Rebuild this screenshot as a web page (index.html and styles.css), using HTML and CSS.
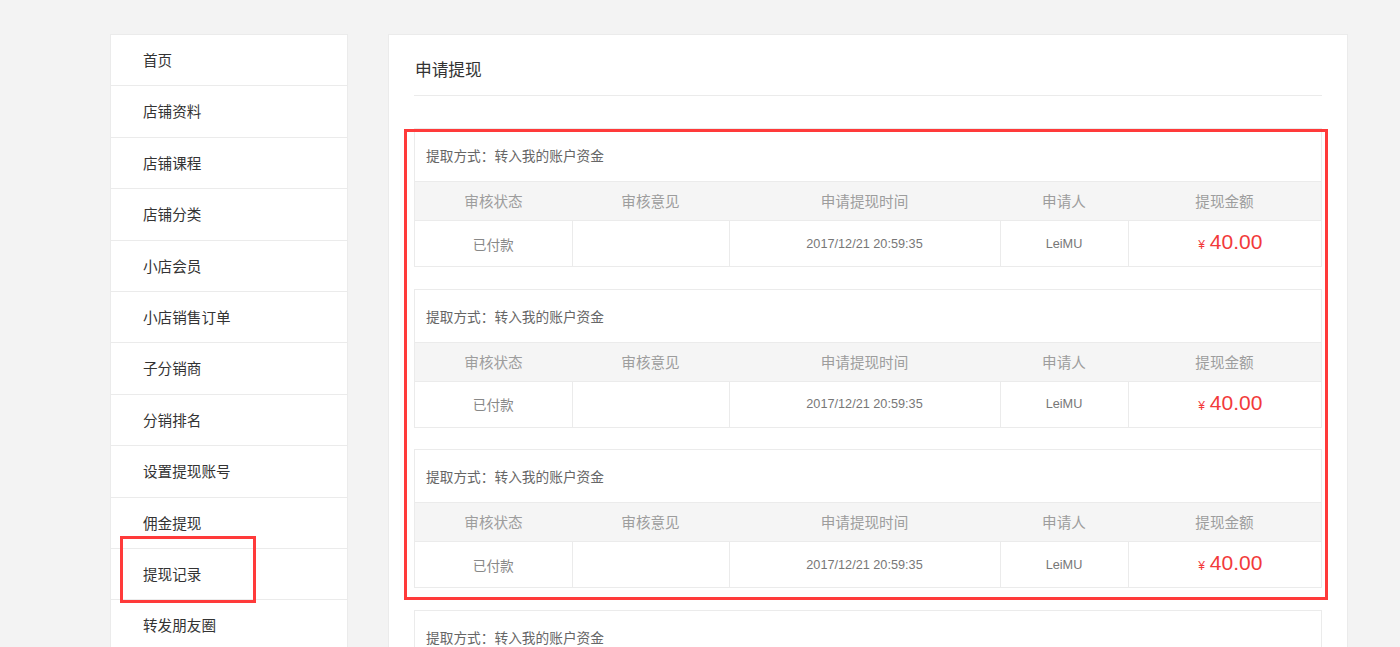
FILE: index.html
```html
<!DOCTYPE html>
<html>
<head>
<meta charset="utf-8">
<title>提现记录</title>
<link rel="stylesheet" href="styles.css">
</head>
<body>

<div class="wrap">

<div class="sidebar">
<a class="navItem" href="#">首页</a>
<a class="navItem" href="#">店铺资料</a>
<a class="navItem" href="#">店铺课程</a>
<a class="navItem" href="#">店铺分类</a>
<a class="navItem" href="#">小店会员</a>
<a class="navItem" href="#">小店销售订单</a>
<a class="navItem" href="#">子分销商</a>
<a class="navItem" href="#">分销排名</a>
<a class="navItem" href="#">设置提现账号</a>
<a class="navItem" href="#">佣金提现</a>
<a class="navItem current" href="#">提现记录<span class="markBox markNav"></span></a>
<a class="navItem" href="#">转发朋友圈</a>
</div>

<div class="main">
<div class="mainTitle">申请提现</div>

<div class="recordList">
<span class="markBox markList"></span>

<div class="record">
<div class="recordHead">提取方式：转入我的账户资金</div>
<table class="recordTable">
<tr><th class="c1">审核状态</th><th class="c2">审核意见</th><th class="c3">申请提现时间</th><th class="c4">申请人</th><th class="c5">提现金额</th></tr>
<tr><td>已付款</td><td></td><td class="num">2017/12/21 20:59:35</td><td class="num">LeiMU</td><td class="money"><span class="yen">¥</span>40.00</td></tr>
</table>
</div>

<div class="record">
<div class="recordHead">提取方式：转入我的账户资金</div>
<table class="recordTable">
<tr><th class="c1">审核状态</th><th class="c2">审核意见</th><th class="c3">申请提现时间</th><th class="c4">申请人</th><th class="c5">提现金额</th></tr>
<tr><td>已付款</td><td></td><td class="num">2017/12/21 20:59:35</td><td class="num">LeiMU</td><td class="money"><span class="yen">¥</span>40.00</td></tr>
</table>
</div>

<div class="record">
<div class="recordHead">提取方式：转入我的账户资金</div>
<table class="recordTable">
<tr><th class="c1">审核状态</th><th class="c2">审核意见</th><th class="c3">申请提现时间</th><th class="c4">申请人</th><th class="c5">提现金额</th></tr>
<tr><td>已付款</td><td></td><td class="num">2017/12/21 20:59:35</td><td class="num">LeiMU</td><td class="money"><span class="yen">¥</span>40.00</td></tr>
</table>
</div>

<div class="record">
<div class="recordHead">提取方式：转入我的账户资金</div>
</div>

</div>
</div>

</div>

</body>
</html>
```

FILE: styles.css
```css
html,body{
margin:0;
padding:0;
}

body{
background-color:#f3f3f3;
font-family:"Noto Sans CJK SC","Liberation Sans",sans-serif;
color:#333;
height:647px;
overflow:hidden;
}

.wrap{
display:flex;
align-items:flex-start;
gap:40px;
padding:34px 0 0 110px;
}

/* left menu */
.sidebar{
width:238px;
flex-shrink:0;
background-color:white;
border:1px solid #ebebeb;
border-bottom:none;
box-sizing:border-box;
min-height:700px;
}

.navItem{
display:block;
position:relative;
height:51.4px;
line-height:50px;
padding-left:32px;
border-bottom:1px solid #ebebeb;
box-sizing:border-box;
font-size:14.6px;
color:#333;
text-decoration:none;
}

/* right panel */
.main{
width:960px;
background-color:white;
border:1px solid #ebebeb;
box-sizing:border-box;
padding:0 25px;
min-height:700px;
}

.mainTitle{
padding:22px 0 14px 1px;
line-height:24px;
font-size:16.7px;
color:#333;
border-bottom:1px solid #ebebeb;
}

.recordList{
position:relative;
margin-top:32px;
}

.record{
border:1px solid #ebebeb;
margin-bottom:21.67px;
}

.recordHead{
height:52px;
line-height:52px;
padding-left:11px;
font-size:13.7px;
color:#666;
}

.recordTable{
width:100%;
border-collapse:collapse;
table-layout:fixed;
}

.recordTable th{
height:38px;
line-height:20px;
padding:0;
background-color:#f5f5f5;
font-weight:normal;
font-size:14.6px;
color:#9d9d9d;
border-top:1px solid #ebebeb;
border-bottom:1px solid #ebebeb;
}

.recordTable td{
height:45px;
line-height:20px;
text-align:center;
font-size:13.7px;
color:#888;
border-left:1px solid #ebebeb;
padding:0;
}
.recordTable td:first-child{
border-left:none;
}

.c1{width:157px;}
.c2{width:157px;}
.c3{width:271px;}
.c4{width:128px;}

.recordTable td.num{
font-family:"Liberation Sans",Arial,sans-serif;
font-size:12.7px;
color:#777;
}

.recordTable td.money{
font-family:"Liberation Sans",Arial,sans-serif;
font-size:21px;
line-height:24px;
padding-left:11px;
color:#f23a3a;
}
.yen{
font-size:12px;
margin-right:5px;
}

/* red marking boxes drawn on top */
.markBox{
position:absolute;
border:3px solid #ff3a3a;
pointer-events:none;
}
.markNav{
left:9px;
top:-13px;
width:130px;
height:61px;
}
.markList{
left:-10px;
top:1px;
width:918px;
height:465px;
}
```
